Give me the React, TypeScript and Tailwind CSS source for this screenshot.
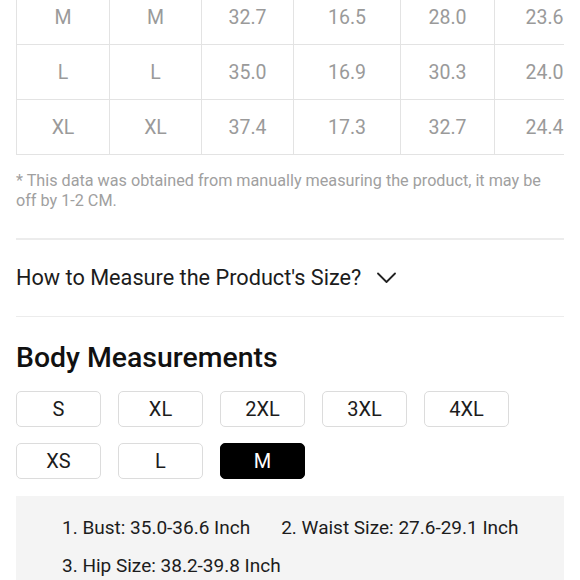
import React from "react";

const rows = [
  ["M", "M", "32.7", "16.5", "28.0", "23.6"],
  ["L", "L", "35.0", "16.9", "30.3", "24.0"],
  ["XL", "XL", "37.4", "17.3", "32.7", "24.4"],
];
const widths = ["w-[93px]", "w-[92px]", "w-[92px]", "w-[107px]", "w-[94px]", "w-[100px]"];

function Chevron() {
  return (
    <svg width="19" height="12" viewBox="0 0 19 12" fill="none" className="ml-[16px] mt-[1px]">
      <path d="M1 1.5 L9.5 10 L18 1.5" stroke="#222" strokeWidth="1.8" strokeLinecap="round" strokeLinejoin="round" />
    </svg>
  );
}

export default function App() {
  const sizes1 = ["S", "XL", "2XL", "3XL", "4XL"];
  const sizes2 = ["XS", "L", "M"];
  return (
    <div className="w-[580px] h-[580px] overflow-hidden bg-white font-['Roboto',_'Liberation_Sans',_sans-serif]">
      <div className="ml-[16px] w-[548px] overflow-hidden">
        <table className="-mt-[11px] border-collapse table-fixed w-[578px]">
          <tbody>
            {rows.map((r, i) => (
              <tr key={i} className="h-[55px]">
                {r.map((c, j) => (
                  <td
                    key={j}
                    className={`${widths[j]} border-[1.5px] border-[#e3e3e3] text-center text-[19.5px] text-[#9a9a9a] p-0 pt-[2px]`}
                  >
                    {c}
                  </td>
                ))}
              </tr>
            ))}
          </tbody>
        </table>
      </div>
      <div className="mx-[16px] w-[548px]">
        <p className="mt-[16px] w-[540px] text-[16.2px] leading-[20px] text-[#a0a0a0]">
          * This data was obtained from manually measuring the product, it may be off by 1-2 CM.
        </p>
        <div className="mt-[27px] h-[1.5px] bg-[#ececec]" />
        <div className="h-[76px] flex items-center">
          <span className="text-[21.7px] leading-[28px] text-[#1c1c1c]">How to Measure the Product's Size?</span>
          <Chevron />
        </div>
        <div className="h-[1.5px] bg-[#ececec]" />
        <h2 className="mt-[25px] text-[28.4px] leading-[32px] font-medium text-[#111]">Body Measurements</h2>
        <div className="mt-[17px] flex flex-col gap-y-[16px]">
          <div className="flex gap-x-[17px]">
            {sizes1.map((s) => (
              <div
                key={s}
                className="w-[85px] h-[36px] rounded-[5px] border border-[#dcdcdc] flex items-center justify-center text-[20px] text-[#1c1c1c]"
              >
                {s}
              </div>
            ))}
          </div>
          <div className="flex gap-x-[17px]">
            {sizes2.map((s) => (
              <div
                key={s}
                className={`w-[85px] h-[36px] rounded-[5px] border flex items-center justify-center text-[20px] ${
                  s === "M" ? "bg-black border-black text-white" : "border-[#dcdcdc] text-[#1c1c1c]"
                }`}
              >
                {s}
              </div>
            ))}
          </div>
        </div>
        <div className="mt-[17px] bg-[#f4f4f4] pl-[46px] pt-[13px] pb-[10px]">
          <div className="flex flex-wrap gap-x-[31px] text-[19px] leading-[38px] text-[#1c1c1c]">
            <span>1. Bust: 35.0-36.6 Inch</span>
            <span>2. Waist Size: 27.6-29.1 Inch</span>
            <span>3. Hip Size: 38.2-39.8 Inch</span>
          </div>
        </div>
      </div>
    </div>
  );
}
